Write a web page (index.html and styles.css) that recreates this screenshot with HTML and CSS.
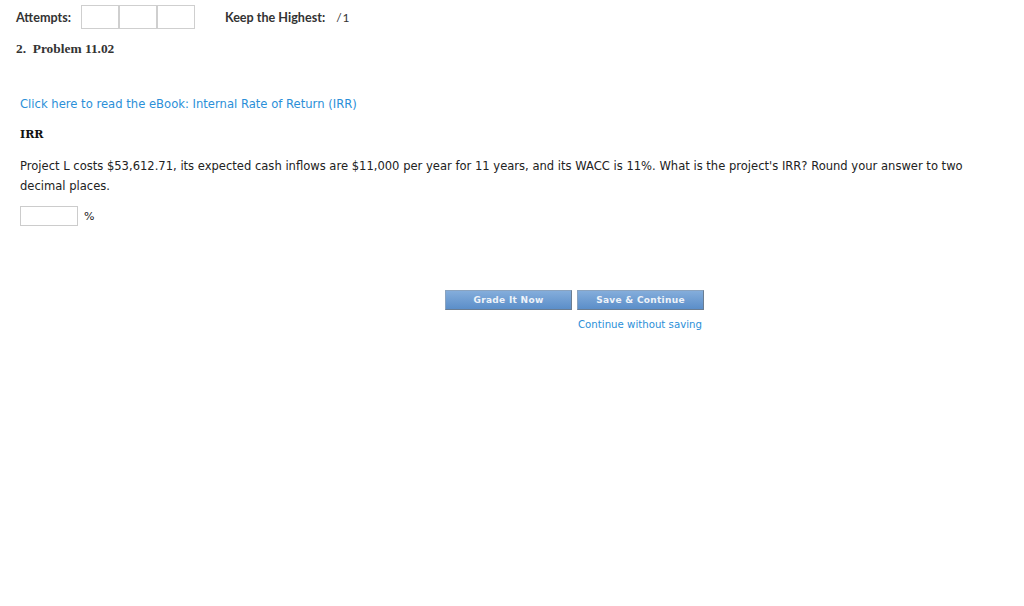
FILE: index.html
```html
<!DOCTYPE html>
<html>
<head>
<meta charset="utf-8">
<link rel="stylesheet" href="styles.css">
</head>
<body>
<div class="topbar">
  <span class="label">Attempts:</span>
  <div class="boxes"><span class="box"></span><span class="box"></span><span class="box"></span></div>
  <span class="label keep">Keep the Highest:</span>
  <span class="score">/1</span>
</div>
<div class="problem-title">2.&nbsp; Problem 11.02</div>
<div class="content">
  <a class="ebook" href="#">Click here to read the eBook: Internal Rate of Return (IRR)</a>
  <div class="heading">IRR</div>
  <p class="question">Project L costs $53,612.71, its expected cash inflows are $11,000 per year for 11 years, and its WACC is 11%. What is the project's IRR? Round your answer to two decimal places.</p>
  <div class="answer"><span class="input"></span><span class="unit">%</span></div>
</div>
<div class="actions">
  <div class="buttons">
    <span class="btn">Grade It Now</span>
    <span class="btn">Save &amp; Continue</span>
  </div>
  <a class="nosave" href="#">Continue without saving</a>
</div>
</body>
</html>
```
FILE: styles.css
```css
html, body { margin: 0; padding: 0; background: #fff; }
body { font-family: "DejaVu Sans", Verdana, sans-serif; color: #222; }
.topbar { display: flex; align-items: center; height: 24px; padding: 5px 0 0 16px; }
.label { font-family: Lato, "Open Sans", sans-serif; font-weight: bold; font-size: 12.6px; color: #333; }
.boxes { display: flex; margin-left: 10px; }
.box { width: 36px; height: 22px; border: 1px solid #cfcfcf; }
.keep { margin-left: 30px; }
.score { font-family: Lato, "Open Sans", sans-serif; font-size: 12px; color: #333; margin-left: 11px; letter-spacing: 1px; }
.problem-title { font-family: "Liberation Serif", "Times New Roman", serif; font-weight: bold; font-size: 13.4px; color: #333; padding: 12px 0 0 16px; }
.content { padding: 40px 30px 0 20px; width: 974px; }
.ebook { display: block; font-size: 11.6px; color: #2b8fd8; text-decoration: none; line-height: 14px; }
.heading { font-family: "DejaVu Serif", Georgia, serif; font-weight: bold; font-size: 11px; color: #111; margin-top: 17px; }
.question { font-size: 11.55px; line-height: 20px; margin: 15px 0 0 0; color: #222; }
.answer { display: flex; align-items: center; margin-top: 10px; }
.input { width: 56px; height: 18px; border: 1px solid #ccc; }
.unit { font-size: 11px; margin-left: 6px; }
.actions { display: flex; flex-direction: column; align-items: flex-start; padding: 64px 0 0 445px; }
.buttons { display: flex; gap: 5px; }
.btn { width: 125px; height: 18px; border: 1px solid #6a7d92; border-top-color: #8aa3bf; border-left-color: #8aa3bf; background: linear-gradient(#84addb, #5b8ec9); color: #eef3f9; font-size: 9px; font-weight: bold; display: flex; align-items: center; justify-content: center; letter-spacing: 0.3px; }
.nosave { font-size: 10.2px; color: #2b8fd8; text-decoration: none; margin: 9px 0 0 133px; }
```
